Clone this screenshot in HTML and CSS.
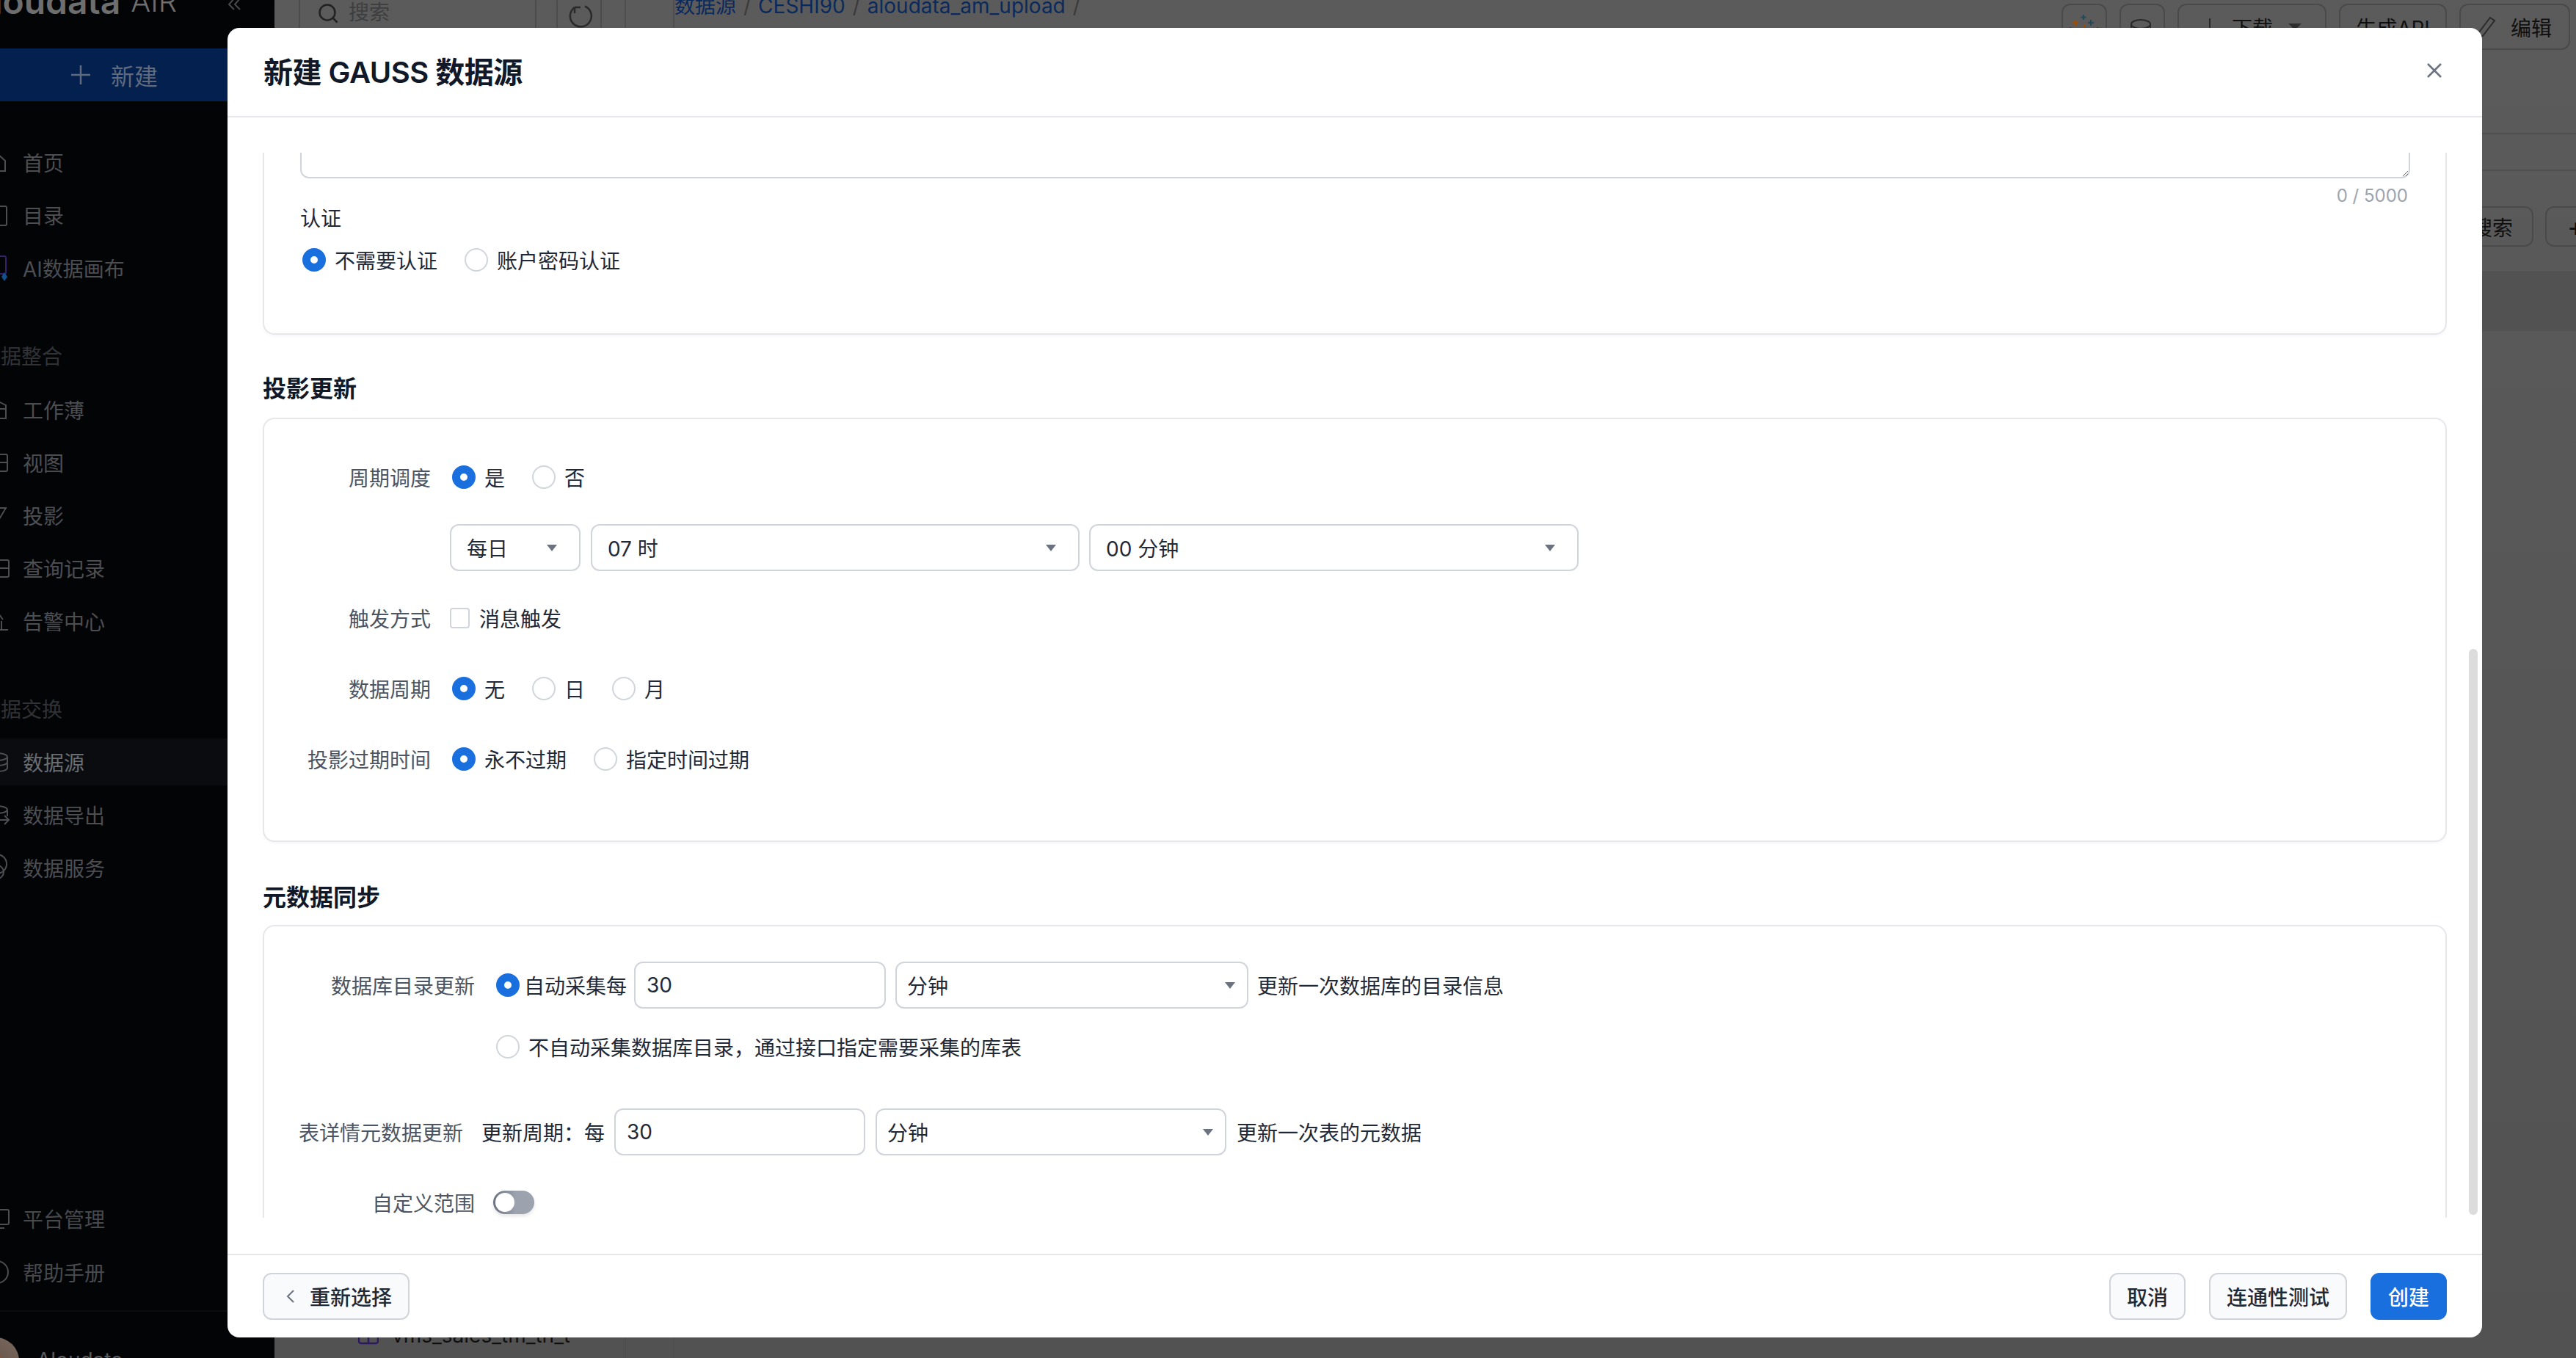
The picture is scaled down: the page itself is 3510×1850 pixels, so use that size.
FILE: index.html
```html
<!DOCTYPE html>
<html lang="zh-CN">
<head>
<meta charset="utf-8">
<title>新建 GAUSS 数据源</title>
<link rel="stylesheet" href="styles.css">
</head>
<body>
<div class="app">
  <aside class="sidebar">
    <div class="side">
      <div class="logo">
        <span class="logo-name">Aloudata</span>
        <span class="logo-air">AIR</span>
        <svg class="collapse" width="20" height="24" viewBox="0 0 20 24"><path d="M9-2 2 6l7 7M17-2l-7 8 7 7"/></svg>
      </div>
      <div class="new-btn">
        <svg width="28" height="28" viewBox="0 0 28 28"><path d="M14 1v26M1 14h26"/></svg>
        <span>新建</span>
      </div>
      <nav class="nav nav-first">
        <a class="item"><svg class="ico" viewBox="0 0 28 28"><path d="M3 12 14 2l11 10v14H3z"/></svg>首页</a>
        <a class="item"><svg class="ico" viewBox="0 0 28 28"><rect x="3" y="2" width="24" height="26" rx="2"/></svg>目录</a>
        <a class="item"><svg class="ico ico-ai" viewBox="0 0 28 28"><rect x="2" y="-2" width="24" height="24" rx="2"/><path class="ai-star" d="M24 20l4 6-4 6-4-6z"/></svg>AI数据画布</a>
      </nav>
      <div class="group-title">数据整合</div>
      <nav class="nav">
        <a class="item"><svg class="ico" viewBox="0 0 28 28"><path d="M2 8 14 2l12 6v18H2zM2 13h24"/></svg>工作薄</a>
        <a class="item"><svg class="ico" viewBox="0 0 28 28"><rect x="2" y="3" width="26" height="23" rx="2"/><path d="M2 14h26"/></svg>视图</a>
        <a class="item"><svg class="ico" viewBox="0 0 28 28"><path d="M4 4h22L14 24"/></svg>投影</a>
        <a class="item"><svg class="ico" viewBox="0 0 28 28"><rect x="2" y="3" width="28" height="23" rx="2"/><path d="M2 14h28"/></svg>查询记录</a>
        <a class="item"><svg class="ico" viewBox="0 0 28 28"><path d="M16 4l6 8M8 26h21M20 14v12"/></svg>告警中心</a>
      </nav>
      <div class="group-title group-gap">数据交换</div>
      <nav class="nav">
        <a class="item item-on"><svg class="ico" viewBox="0 0 28 28"><ellipse cx="14" cy="7" rx="14" ry="5"/><path d="M28 7v15c0 3-6 5-14 5M28 14c0 3-6 5-14 5"/></svg>数据源</a>
        <a class="item"><svg class="ico" viewBox="0 0 28 28"><ellipse cx="14" cy="7" rx="14" ry="5"/><path d="M28 7v9M14 21h16M24 15l6 6-6 6"/></svg>数据导出</a>
        <a class="item"><svg class="ico" viewBox="0 0 28 28"><circle cx="14" cy="9" r="13"/><circle cx="14" cy="20" r="9"/></svg>数据服务</a>
      </nav>
      <nav class="nav nav-bottom">
        <a class="item item-low"><svg class="ico" viewBox="0 0 28 28"><rect x="2" y="2" width="28" height="20" rx="2"/><path d="M8 27h16"/></svg>平台管理</a>
        <a class="item item-low"><svg class="ico" viewBox="0 0 28 28"><circle cx="14" cy="14" r="15"/></svg>帮助手册</a>
      </nav>
      <div class="user">
        <span class="avatar"></span>
        <span class="user-name">Aloudata</span>
      </div>
    </div>
  </aside>

  <section class="tree">
    <div class="tree-top">
      <div class="search">
        <svg width="28" height="28" viewBox="0 0 28 28"><circle cx="13" cy="13" r="10.5"/><path d="M20.5 20.5l6 6"/></svg>
        <span>搜索</span>
      </div>
      <div class="refresh">
        <svg width="36" height="32" viewBox="0 0 36 32"><path d="M8 3A14.5 14.500 0 1 0 22 1.500M8 3v8M8 3h8" transform="translate(3 1)"/></svg>
      </div>
    </div>
    <div class="tree-row">
      <svg width="28" height="24" viewBox="0 0 28 24"><rect x="1" y="-10" width="26" height="30" rx="3"/><path d="M14-10v30M1 8h26"/></svg>
      <span class="tree-name">vms_sales_tm_tn_t</span>
    </div>
  </section>

  <div class="gutter"></div>

  <main class="content">
    <div class="topbar">
      <div class="crumbs">
        <a>数据源</a><i>/</i><a>CESHI90</a><i>/</i><a>aloudata_am_upload</a><i>/</i>
      </div>
      <div class="actions">
        <button class="ghost ghost-ico">
          <svg width="36" height="36" viewBox="0 0 36 36"><path class="t-or" d="M6 8v8M2 12h8M18 15v10M13 20h10"/><path class="t-te" d="M17 1v7M13.500 4.500h7M27 8v8M23 12h8M-1 18v6M-4 21h6M36 18v6M33 21h6"/></svg>
        </button>
        <button class="ghost ghost-ico ghost-db">
          <svg width="36" height="40" viewBox="0 0 36 40"><ellipse cx="16" cy="7" rx="13" ry="6"/><path d="M3 7v20c0 3 6 6 13 6M29 7v12M3 17c0 3 6 6 13 6"/></svg>
        </button>
        <button class="ghost ghost-dl">
          <svg width="18" height="24" viewBox="0 0 18 24"><path d="M9 0v22M2 16l7 7 7-7"/></svg>
          <span>下载</span><em class="caret-dark"></em>
        </button>
        <button class="ghost ghost-api">生成API</button>
        <button class="ghost ghost-edit">
          <svg width="26" height="30" viewBox="0 0 26 30"><path d="M18 2l6 4L8 27l-6 2 0-6z"/></svg>
          <span>编辑</span>
        </button>
      </div>
    </div>
    <div class="rule rule-a"></div>
    <div class="rule rule-b"></div>
    <div class="toolbar">
      <button class="ghost ghost-search">搜索</button>
      <button class="ghost ghost-plus">+</button>
    </div>
    <div class="band"></div>
  </main>
</div>

<div class="dialog" role="dialog">
  <header class="dlg-head">
    <h1>新建 GAUSS 数据源</h1>
    <svg class="close" width="22" height="22" viewBox="0 0 22 22"><path d="M2 2l18 18M20 2 2 20"/></svg>
  </header>

  <div class="dlg-body">
    <div class="pane">
      <section class="card card-auth">
        <textarea class="area"></textarea>
        <div class="count">0 / 5000</div>
        <div class="auth-label">认证</div>
        <div class="opts">
          <label class="opt"><input type="radio" name="auth" checked>不需要认证</label>
          <label class="opt"><input type="radio" name="auth">账户密码认证</label>
        </div>
      </section>

      <h2 class="sec">投影更新</h2>
      <section class="card card-proj">
        <div class="row">
          <span class="label">周期调度</span>
          <label class="opt"><input type="radio" name="sch" checked>是</label>
          <label class="opt"><input type="radio" name="sch">否</label>
        </div>
        <div class="row">
          <span class="label"></span>
          <div class="select sel-day"><span>每日</span><em class="caret"></em></div>
          <div class="select sel-wide"><span>07 时</span><em class="caret"></em></div>
          <div class="select sel-wide sel-min"><span>00 分钟</span><em class="caret"></em></div>
        </div>
        <div class="row">
          <span class="label">触发方式</span>
          <label class="check"><input type="checkbox">消息触发</label>
        </div>
        <div class="row">
          <span class="label">数据周期</span>
          <label class="opt"><input type="radio" name="per" checked>无</label>
          <label class="opt"><input type="radio" name="per">日</label>
          <label class="opt"><input type="radio" name="per">月</label>
        </div>
        <div class="row">
          <span class="label">投影过期时间</span>
          <label class="opt"><input type="radio" name="exp" checked>永不过期</label>
          <label class="opt"><input type="radio" name="exp">指定时间过期</label>
        </div>
      </section>

      <h2 class="sec sec-meta">元数据同步</h2>
      <section class="card card-meta">
        <div class="row row-a">
          <span class="label label-meta">数据库目录更新</span>
          <label class="opt opt-tight"><input type="radio" name="cat" checked>自动采集每</label>
          <div class="field field-a">30</div>
          <div class="select sel-unit"><span>分钟</span><em class="caret"></em></div>
          <span class="tail">更新一次数据库的目录信息</span>
        </div>
        <div class="row row-b">
          <span class="label label-meta"></span>
          <label class="opt"><input type="radio" name="cat">不自动采集数据库目录，通过接口指定需要采集的库表</label>
        </div>
        <div class="row row-c">
          <span class="label label-table">表详情元数据更新</span>
          <span class="lead">更新周期：每</span>
          <div class="field field-c">30</div>
          <div class="select sel-unit"><span>分钟</span><em class="caret"></em></div>
          <span class="tail">更新一次表的元数据</span>
        </div>
        <div class="row">
          <span class="label label-meta label-switch">自定义范围</span>
          <span class="switch"><i></i></span>
        </div>
      </section>
    </div>
    <div class="scrollbar"></div>
  </div>

  <footer class="dlg-foot">
    <button class="btn btn-back">
      <svg width="12" height="20" viewBox="0 0 12 20"><path d="M10 2 2 10l8 8"/></svg>
      重新选择
    </button>
    <div class="foot-right">
      <button class="btn">取消</button>
      <button class="btn">连通性测试</button>
      <button class="btn btn-primary">创建</button>
    </div>
  </footer>
</div>
</body>
</html>
```
FILE: styles.css
```css
* { box-sizing: border-box; }
html, body { margin: 0; height: 100%; overflow: hidden; }
body {
  font-family: Inter, "Noto Sans CJK SC", sans-serif;
  font-size: 28px;
  color: #1f2937;
  background: #575757;
}
button { font-family: inherit; font-size: 28px; }

.app { display: flex; height: 1850px; background: linear-gradient(#5b5b5b, #525252); }

/* sidebar */
.sidebar { flex: 0 0 374px; overflow: hidden; background: #030406; }
.side { margin-left: -26px; width: 400px; height: 100%; display: flex; flex-direction: column; }
.logo { height: 66px; flex: none; display: flex; margin-left: -18px; padding-right: 44px; align-items: flex-start; color: #6e6e6e; }
.logo-name { font-size: 48px; font-weight: 600; line-height: 40px; margin-top: -18px; }
.logo-air { font-size: 40px; font-weight: 300; line-height: 40px; margin: -18px 0 0 14px; }
.collapse { margin-left: auto; fill: none; stroke: #4a4a4a; stroke-width: 2; }
.new-btn {
  height: 72px; flex: none; display: flex; align-items: center;
  padding-left: 122px; gap: 27px; background: #03204f; color: #5f6a7c; font-size: 32px;
}
.new-btn svg { fill: none; stroke: #5f6a7c; stroke-width: 2.5; }
.nav { display: flex; flex-direction: column; gap: 8px; }
.nav-first { margin-top: 51px; }
.item {
  height: 64px; display: flex; align-items: center; gap: 21px; padding-left: 8px;
  color: #4c4e52;
}
.item-on { background: #0a0c10; color: #6b6d70; }
.ico { width: 28px; height: 28px; fill: none; stroke: #4c4e52; stroke-width: 2; overflow: visible; flex: none; }
.ico-ai { stroke: #34206e; }
.ai-star { fill: #10508c; stroke: none; }
.group-title { height: 64px; margin: 57px 0 8px -1px; line-height: 64px; color: #303236; }
.group-gap { margin-top: 57px; margin-bottom: 7px; }
.nav-bottom { margin-top: auto; gap: 9px; }
.item-low { color: #47494d; }
.user { height: 65px; margin-top: 20px; border-top: 2px solid #0b0c0e; display: flex; padding-top: 35px; flex: none; overflow: hidden; }
.avatar {
  width: 64px; height: 64px; margin-left: -12px; border-radius: 50%; flex: none;
  background: radial-gradient(circle at 40% 65%, #a04c12 0 22%, #6d5a50 40%, #7a6a60 100%);
}
.user-name { margin: 11px 0 0 24px; color: #5a5a5a; line-height: 40px; }

/* tree */
.tree { flex: 0 0 479px; border-right: 2px solid #4e4e4e; display: flex; flex-direction: column; overflow: hidden; }
.tree-top { display: flex; padding-left: 33px; margin-top: -20px; height: 100px; }
.search {
  width: 324px; height: 100px; border: 2px solid #4c4c4c; display: flex; align-items: flex-start;
  padding: 15px 0 0 24px; gap: 14px; color: #3e3e3e; line-height: 40px;
}
.search svg { fill: none; stroke: #222; stroke-width: 2.5; flex: none; margin-top: 7px; }
.refresh {
  width: 62px; height: 100px; margin-left: 27px; border: 2px solid #4c4c4c; padding: 24px 0 0 12px;
}
.refresh svg { fill: none; stroke: #2a2a2a; stroke-width: 2.5; }
.tree-row { margin-top: auto; height: 70px; display: flex; align-items: flex-start; padding-left: 114px; gap: 18px; color: #111; }
.tree-row svg { fill: none; stroke: #2d1a5e; stroke-width: 2.5; margin-top: 30px; flex: none; overflow: hidden; }
.tree-name { width: 242px; overflow: hidden; white-space: nowrap; margin-top: 19px; line-height: 40px; }

.gutter { flex: 0 0 66px; border-right: 2px solid #4e4e4e; }

/* page behind the dialog */
.content { flex: 1; min-width: 0; display: flex; flex-direction: column; }
.topbar { height: 68px; flex: none; display: flex; justify-content: space-between; padding-right: 8px; }
.crumbs { display: flex; margin-top: -12px; line-height: 40px; color: #0a2a5e; height: 40px; }
.crumbs i { font-style: normal; color: #3a3a3a; margin: 0 10px; }
.actions { display: flex; gap: 17px; padding-top: 5px; }
.ghost {
  height: 63px; border: 2px solid #4a4a4a; border-radius: 12px; background: transparent; color: #101010;
  display: flex; align-items: center; padding: 0; flex: none;
}
.ghost svg { fill: none; stroke: #2a2a2a; stroke-width: 2; overflow: visible; }
.ghost svg .t-or { stroke: #9a4d06; stroke-width: 2.5; }
.ghost svg .t-te { stroke: #244a58; }
.ghost-ico { width: 62px; justify-content: center; }
.ghost-db svg { margin-top: 18px; }
.ghost-dl { width: 203px; padding-left: 33px; gap: 21px; }
.caret-dark { width: 0; height: 0; border: 9px solid transparent; border-top: 9px solid #2e2e2e; border-bottom: 0; }
.ghost-api { width: 147px; justify-content: center; }
.ghost-edit { width: 151px; padding-left: 22px; gap: 20px; }
.rule { height: 2px; flex: none; background: #4f4f4f; }
.rule-a { margin-top: 113px; }
.rule-b { margin-top: 48px; }
.toolbar { display: flex; justify-content: flex-end; gap: 16px; margin-top: 48px; margin-right: -58px; }
.ghost-search { height: 55px; width: 112px; justify-content: center; }
.ghost-plus { height: 55px; width: 100px; padding-left: 28px; font-size: 36px; }
.band { height: 82px; flex: none; margin-top: 33px; background: #525252; }

/* dialog */
.dialog {
  position: absolute; left: 310px; top: 38px; width: 3072px; height: 1784px;
  display: flex; flex-direction: column; background: #fff; border-radius: 16px; overflow: hidden;
}
.dlg-head {
  height: 122px; flex: none; border-bottom: 2px solid #e5e7eb;
  display: flex; align-items: center; justify-content: space-between; padding: 0 54px 4px 49px;
}
.dlg-head h1 { margin: 0; font-size: 40px; font-weight: 600; letter-spacing: -.5px; color: #111827; }
.close { fill: none; stroke: #6b7280; stroke-width: 2.5; }
.dlg-body { flex: 1; min-height: 0; padding: 48px 48px 49px; position: relative; }
.pane { height: 100%; overflow: hidden; }
.scrollbar { position: absolute; right: 6px; top: 724px; width: 12px; height: 771px; border-radius: 6px; background: #dcdcdc; }

.card { border: 2px solid #e5e7eb; border-radius: 16px; box-shadow: 0 2px 4px rgba(0, 0, 0, .04); background: #fff; }
.card-auth { margin-top: -100px; padding: 30px 48px 80px 49px; }
.area {
  display: block; width: 100%; height: 103px; border: 2px solid #d1d5db; border-radius: 12px;
  padding: 0; margin: 0; outline: none; background: #fff;
}
.count { margin-top: 8px; text-align: right; font-size: 24px; line-height: 32px; color: #9ca3af; padding-right: 3px; }
.auth-label { margin-top: -5px; line-height: 40px; color: #1f2937; }
.opts { display: flex; margin-top: 16px; height: 40px; align-items: center; }

.sec { margin: 50px 0 15px; font-size: 32px; line-height: 48px; font-weight: 600; color: #111827; }
.sec-meta { margin: 52px 0 13px; }
.card-proj { padding: 47px 0 79px; display: flex; flex-direction: column; gap: 32px; }
.card-meta { padding: 48px 0 120px; }

.row { display: flex; align-items: center; height: 64px; }
.label { width: 227px; margin-right: 26px; text-align: right; color: #4b5563; flex: none; }
.label-meta { width: 287px; }
.label-switch { margin-right: 25px; }
.label-table { width: 271px; margin-right: 25px; }
.row-a { margin-bottom: 20px; }
.row-b { margin-bottom: 52px; }
.row-c { margin-bottom: 32px; }

.opt { display: flex; align-items: center; gap: 12px; margin-right: 34px; white-space: nowrap; color: #1f2937; }
.opt-tight { gap: 6px; margin-right: 10px; }
.opt input {
  appearance: none; width: 32px; height: 32px; margin: 0 0 0 3px; flex: none;
  border: 2px solid #d1d5db; border-radius: 50%; background: #fff;
}
.opt input:checked { border: 11px solid #1a6fdf; }
.check { display: flex; align-items: center; gap: 13px; color: #1f2937; }
.check input {
  appearance: none; width: 27px; height: 28px; margin: 0; flex: none;
  border: 2px solid #d1d5db; border-radius: 4px; background: #fff;
}

.select, .field {
  height: 64px; border: 2px solid #d1d5db; border-radius: 12px; background: #fff;
  display: flex; align-items: center; flex: none; color: #1f2937;
}
.select { justify-content: space-between; padding: 0 30px 0 21px; }
.sel-day { width: 178px; }
.sel-wide { width: 666px; margin-left: 14px; }
.sel-min { margin-left: 13px; width: 667px; }
.sel-unit { width: 478px; margin-left: 14px; padding: 0 16px 0 14px; }
.row-a .sel-unit { width: 481px; margin-left: 13px; }
.row-a .tail { margin-left: 12px; }
.caret { width: 0; height: 0; border: 7px solid transparent; border-top: 9px solid #6b7280; border-bottom: 0; }
.field { padding-left: 15px; }
.field-a { width: 343px; }
.field-c { width: 342px; margin-left: 13px; }
.tail { margin-left: 14px; color: #1f2937; }
.lead { color: #1f2937; white-space: nowrap; }

.switch {
  width: 56px; height: 32px; border-radius: 16px; padding: 3px; flex: none;
  background: linear-gradient(90deg, #6b7280, #9ca3af 55%);
  box-shadow: 0 3px 5px rgba(0, 0, 0, .1);
}
.switch i { display: block; width: 26px; height: 26px; border-radius: 50%; background: #fff; }

.dlg-foot {
  height: 114px; flex: none; border-top: 2px solid #e5e7eb;
  display: flex; align-items: center; justify-content: space-between; padding: 0 48px;
}
.foot-right { display: flex; gap: 32px; }
.btn {
  height: 64px; padding: 0 22px; border: 2px solid #d1d5db; border-radius: 12px; background: #f9fafb;
  color: #1f2937; font-weight: 500; display: flex; align-items: center;
}
.btn-back { gap: 20px; padding-left: 30px; padding-right: 22px; }
.btn-back svg { fill: none; stroke: #6b7280; stroke-width: 2; }
.btn-primary { background: #1a6fdf; border-color: #1a6fdf; color: #fff; }
```
